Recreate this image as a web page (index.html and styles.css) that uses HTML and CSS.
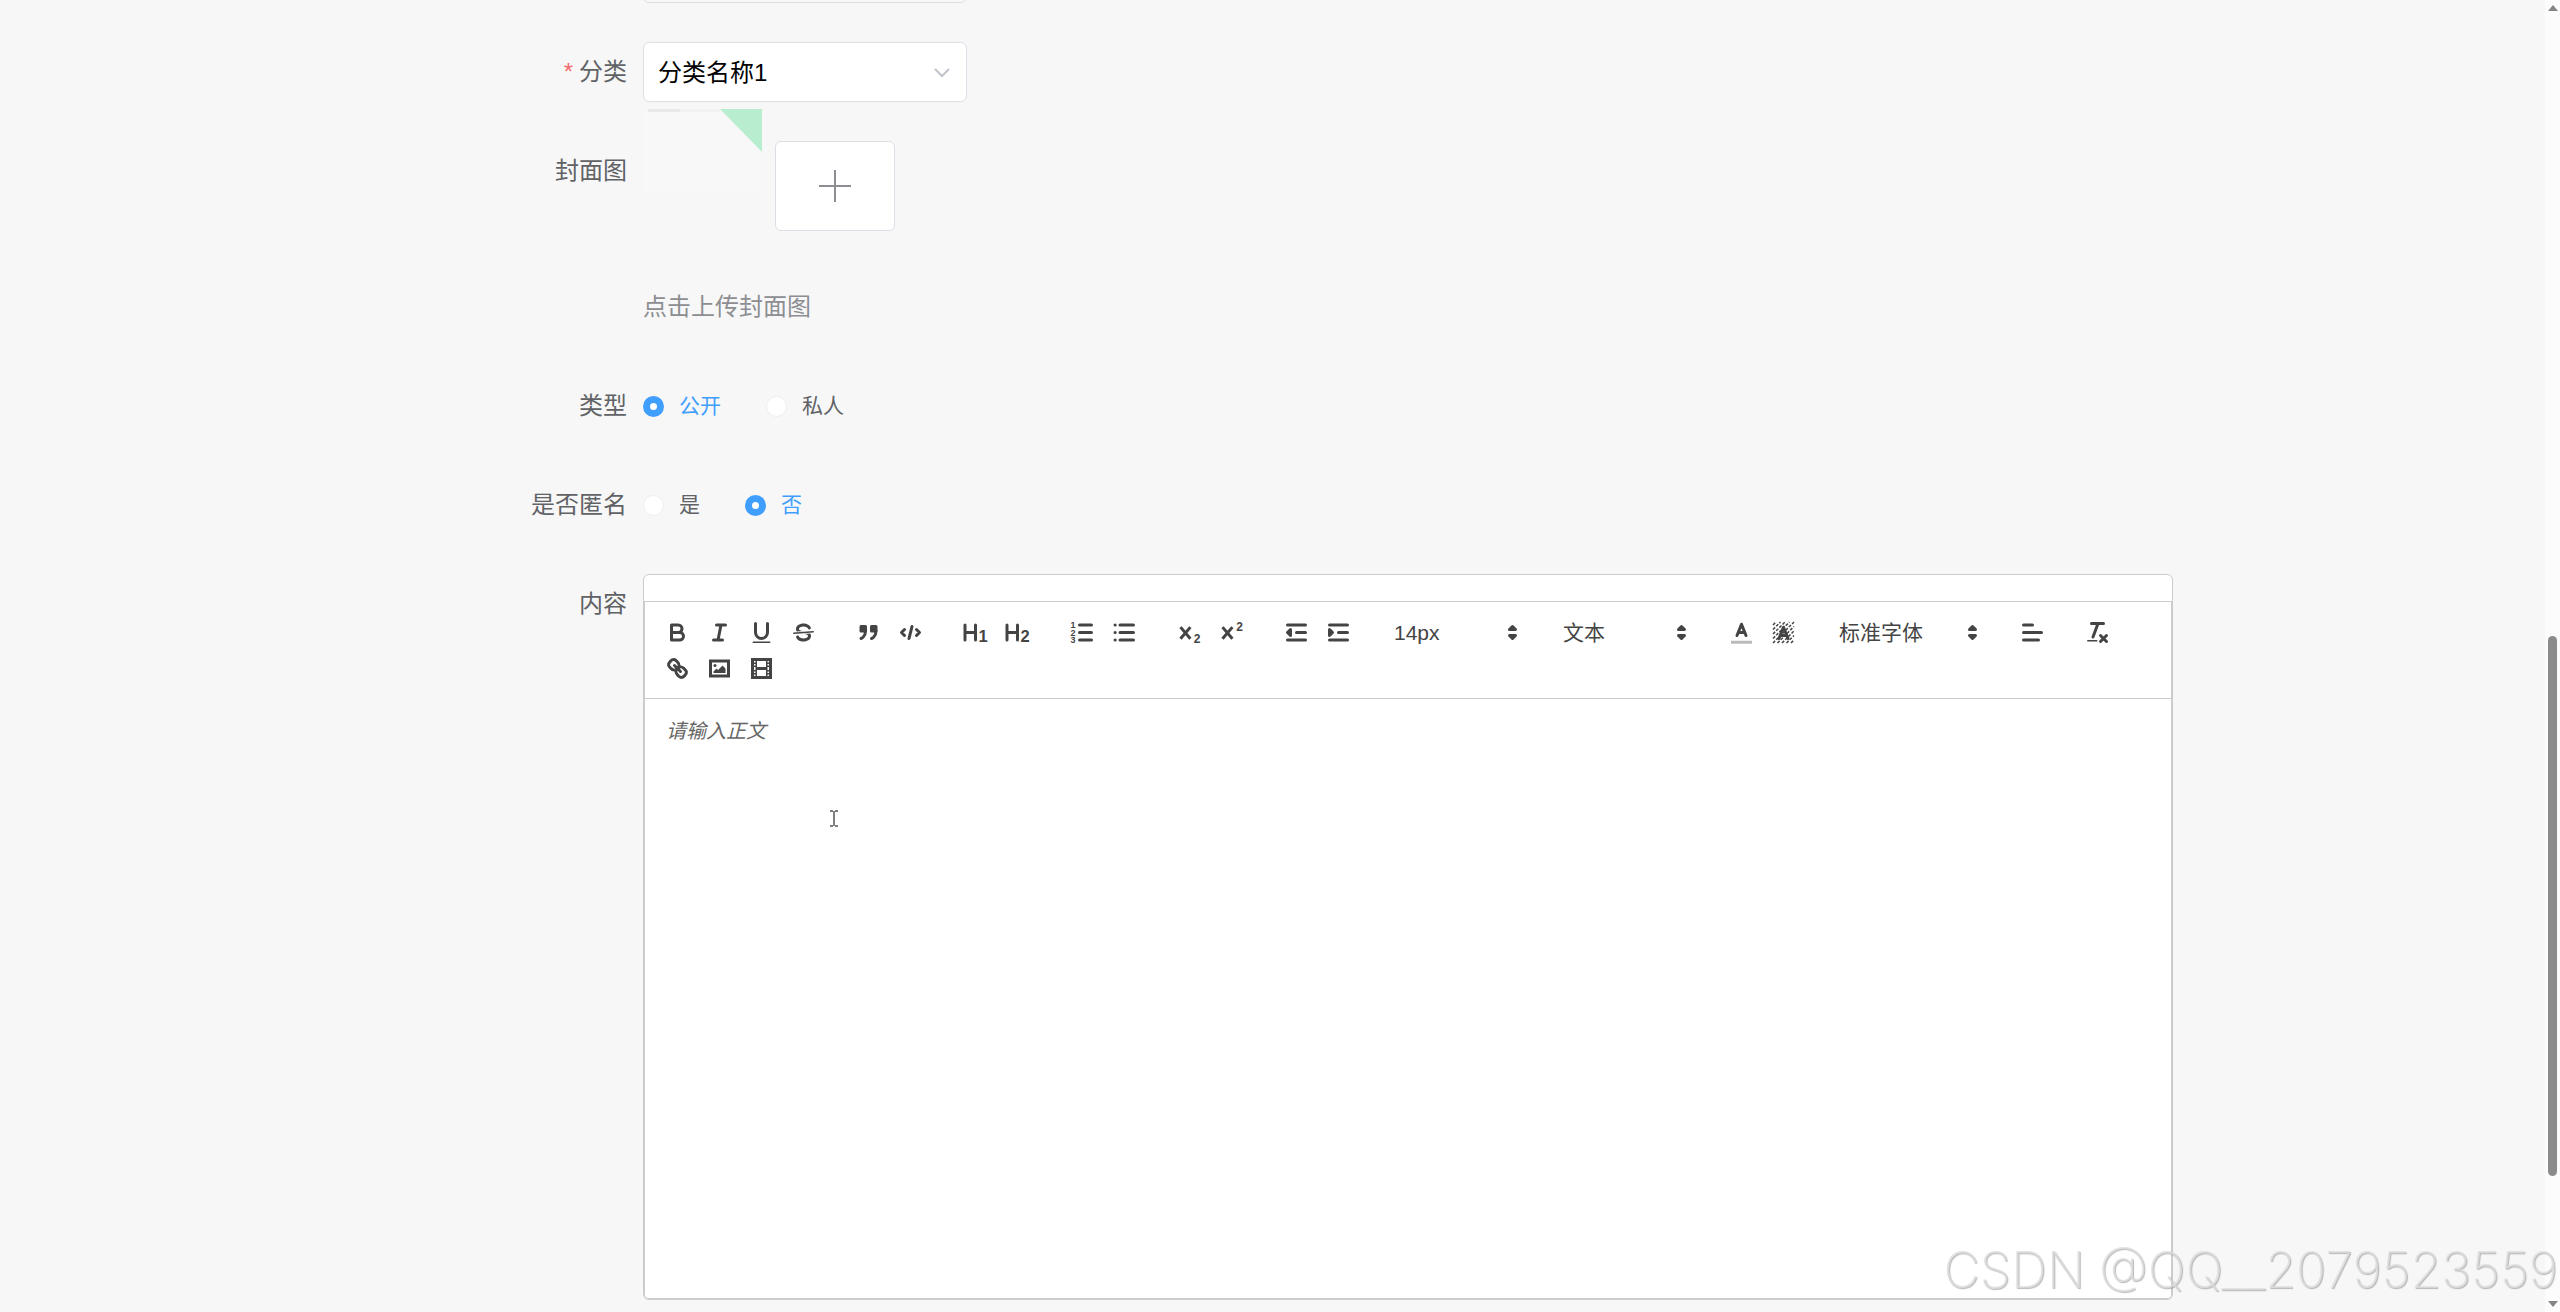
FILE: index.html
```
<!DOCTYPE html>
<html lang="zh-CN">
<head>
    <meta charset="utf-8">
    <meta name="viewport" content="width=device-width, initial-scale=1">
    <title>发布</title>
    <link rel="stylesheet" href="styles.css">
</head>

<body>

<form class="form">

    <div class="form-item">
        <label class="form-label" for="title"></label>
        <div class="form-content">
            <input class="input" type="text" id="title">
        </div>
    </div>

    <div class="form-item">
        <label class="form-label required" for="category">分类</label>
        <div class="form-content">
            <div class="select">
                <select id="category">
                    <option>分类名称1</option>
                </select>
                <svg class="chevron" viewBox="0 0 16 10"><path d="M1 1l7 7 7-7"/></svg>
            </div>
        </div>
    </div>

    <div class="form-item">
        <label class="form-label" for="cover">封面图</label>
        <div class="form-content">
            <div class="upload">
                <svg class="thumb" viewBox="0 0 119 84">
                    <rect width="119" height="84" fill="#f8f8f8"/>
                    <rect x="5" width="72" height="3" fill="#f2f2f3"/>
                    <rect x="5" width="32" height="3" fill="#e9e9ea"/>
                    <path d="M77 0H119V43Z" fill="#b9edd0"/>
                </svg>
                <button type="button" class="upload-btn" id="cover">
                    <svg viewBox="0 0 32 32"><path d="M16 0V32M0 16H32"/></svg>
                </button>
            </div>
            <div class="tip">点击上传封面图</div>
        </div>
    </div>

    <div class="form-item">
        <span class="form-label">类型</span>
        <div class="form-content radios">
            <label class="radio"><input type="radio" name="type" checked><span>公开</span></label>
            <label class="radio"><input type="radio" name="type"><span>私人</span></label>
        </div>
    </div>

    <div class="form-item">
        <span class="form-label">是否匿名</span>
        <div class="form-content radios">
            <label class="radio"><input type="radio" name="anonymous"><span>是</span></label>
            <label class="radio"><input type="radio" name="anonymous" checked><span>否</span></label>
        </div>
    </div>

    <div class="form-item">
        <label class="form-label" for="content">内容</label>
        <div class="form-content editor">
            <div class="toolbar">
                <div class="formats">
                    <button type="button" title="bold"><svg viewBox="0 0 18 18"><path d="M5,4H9.5A2.5,2.5,0,0,1,9.5,9H5Z"/><path d="M5,9h5.5A2.5,2.5,0,0,1,10.5,14H5Z"/></svg></button>
                    <button type="button" title="italic"><svg viewBox="0 0 18 18"><path d="M7,4H13M5,14H11M8,14L10,4"/></svg></button>
                    <button type="button" title="underline"><svg viewBox="0 0 18 18"><path d="M5,3V9a4,4,0,0,0,8,0V3"/><rect class="fill" x="3" y="15" width="12" height="1" rx="0.5"/></svg></button>
                    <button type="button" title="strike"><svg viewBox="0 0 18 18"><path class="thin" d="M15.5,8.5L2.5,9.5"/><path class="fill" d="M9.007,8C6.542,7.791,6,7.519,6,6.5,6,5.792,7.283,5,9,5c1.571,0,2.765.679,2.969,1.309a1,1,0,0,0,1.9-.617C13.356,4.106,11.354,3,9,3,6.2,3,4,4.538,4,6.5a3.2,3.2,0,0,0,.5,1.843Z"/><path class="fill" d="M8.984,10C11.457,10.208,12,10.479,12,11.5c0,.708-1.283,1.5-3,1.5-1.571,0-2.765-.679-2.969-1.309a1,1,0,1,0-1.9.617C4.644,13.894,6.646,15,9,15c2.8,0,5-1.538,5-3.5a3.2,3.2,0,0,0-.5-1.843Z"/></svg></button>
                </div>
                <div class="formats">
                    <button type="button" title="blockquote"><svg viewBox="0 0 18 18"><rect class="both" x="4" y="5" width="3" height="3"/><rect class="both" x="11" y="5" width="3" height="3"/><path d="M7,8c0,4.031-3,5-3,5M14,8c0,4.031-3,5-3,5"/></svg></button>
                    <button type="button" title="code"><svg viewBox="0 0 18 18"><path d="M5,7L3,9L5,11M13,7L15,9L13,11M10,5L8,13"/></svg></button>
                </div>
                <div class="formats">
                    <button type="button" title="header 1"><svg viewBox="0 0 18 18"><path d="M2,4V14M9,4V14M2,9H9"/><text x="11" y="15" font-size="11">1</text></svg></button>
                    <button type="button" title="header 2"><svg viewBox="0 0 18 18"><path d="M2,4V14M9,4V14M2,9H9"/><text x="11" y="15" font-size="11">2</text></svg></button>
                </div>
                <div class="formats">
                    <button type="button" title="ordered list"><svg viewBox="0 0 18 18"><path d="M7,4H15M7,9H15M7,14H15"/><text x="1" y="6" font-size="6">1</text><text x="1" y="11" font-size="6">2</text><text x="1" y="16" font-size="6">3</text></svg></button>
                    <button type="button" title="bullet list"><svg viewBox="0 0 18 18"><path d="M6,4H15M6,9H15M6,14H15"/><path d="M2.7,4H2.8M2.7,9H2.8M2.7,14H2.8"/></svg></button>
                </div>
                <div class="formats">
                    <button type="button" title="subscript"><svg viewBox="0 0 18 18"><path class="thick" d="M3,5.4L9.6,13.2M9.6,5.4L3,13.2"/><text x="11.8" y="16" font-size="8">2</text></svg></button>
                    <button type="button" title="superscript"><svg viewBox="0 0 18 18"><path class="thick" d="M3,5.4L9.6,13.2M9.6,5.4L3,13.2"/><text x="12.2" y="7.8" font-size="8">2</text></svg></button>
                </div>
                <div class="formats">
                    <button type="button" title="outdent"><svg viewBox="0 0 18 18"><path d="M3,14H15M3,4H15M9,9H15"/><path class="both" d="M5,7V11L3,9Z"/></svg></button>
                    <button type="button" title="indent"><svg viewBox="0 0 18 18"><path d="M3,14H15M3,4H15M9,9H15"/><path class="both" d="M3,7V11L5,9Z"/></svg></button>
                </div>
                <div class="formats">
                    <div class="picker">
                        <select aria-label="size"><option>14px</option></select>
                        <svg viewBox="0 0 18 18"><path class="both" d="M7,11L9,13L11,11ZM7,7L9,5L11,7Z"/></svg>
                    </div>
                </div>
                <div class="formats">
                    <div class="picker">
                        <select aria-label="header"><option>文本</option></select>
                        <svg viewBox="0 0 18 18"><path class="both" d="M7,11L9,13L11,11ZM7,7L9,5L11,7Z"/></svg>
                    </div>
                </div>
                <div class="formats">
                    <button type="button" title="color"><svg viewBox="0 0 18 18"><path class="faint" d="M2,15.5H16"/><path d="M6,11L9,3.5L12,11M7,9H11"/></svg></button>
                    <button type="button" title="background"><svg viewBox="0 0 18 18"><path class="hatch" d="M2,4L4,2M2,7L7,2M2,10L10,2M2,13L13,2M2,16L16,2M5,16L16,5M8,16L16,8M11,16L16,11M14,16L16,14"/><path d="M6,13L9,5.5L12,13M7,11H11"/></svg></button>
                </div>
                <div class="formats">
                    <div class="picker picker-font">
                        <select aria-label="font"><option>标准字体</option></select>
                        <svg viewBox="0 0 18 18"><path class="both" d="M7,11L9,13L11,11ZM7,7L9,5L11,7Z"/></svg>
                    </div>
                </div>
                <div class="formats">
                    <button type="button" title="align"><svg viewBox="0 0 18 18"><path d="M3,9H15M3,14H13M3,4H9"/></svg></button>
                </div>
                <div class="formats">
                    <button type="button" title="clean"><svg viewBox="0 0 18 18"><path d="M5,3H13M6,12L9.35,3M11,11L15,15M15,11L11,15"/><rect class="fill" x="2" y="14" width="7" height="1" rx="0.5"/></svg></button>
                </div>
                <div class="formats">
                    <button type="button" title="link"><svg viewBox="0 0 18 18"><path d="M7,7L11,11"/><path d="M8.9,4.577a3.476,3.476,0,0,1,.36,4.679A3.476,3.476,0,0,1,4.577,8.9C3.185,7.5,2.035,6.4,4.217,4.217S7.5,3.185,8.9,4.577Z"/><path d="M13.423,9.1a3.476,3.476,0,0,0-4.679-.36,3.476,3.476,0,0,0,.36,4.679c1.392,1.392,2.5,2.542,4.679.36S14.815,10.5,13.423,9.1Z"/></svg></button>
                    <button type="button" title="image"><svg viewBox="0 0 18 18"><rect class="line" x="3" y="4" width="12" height="10"/><circle class="fill" cx="6" cy="7" r="1"/><path class="fill" d="M5,12V11L7,9L8,10L11,7L13,9V12Z"/></svg></button>
                    <button type="button" title="video"><svg viewBox="0 0 18 18"><rect class="line" x="3" y="3" width="12" height="12"/><path class="fill" d="M5,3H6V15H5ZM12,3H13V15H12ZM5,8H13V10H5ZM3,5H6V6H3ZM3,7H6V8H3ZM3,10H6V11H3ZM3,12H6V13H3ZM12,5H15V6H12ZM12,7H15V8H12ZM12,10H15V11H12ZM12,12H15V13H12Z"/></svg></button>
                </div>
            </div>
            <textarea class="editor-text" id="content" placeholder="请输入正文"></textarea>
            <svg class="cursor" viewBox="0 0 8 17"><path d="M0 1H3M5 1H8M4 1V16M0 16H3M5 16H8"/></svg>
        </div>
    </div>

</form>

<div class="scrollbar">
    <svg viewBox="0 0 10 6"><path d="M5 0L10 6H0Z"/></svg>
    <div class="scroll-track"><div class="scroll-thumb"></div></div>
    <svg viewBox="0 0 10 6"><path d="M0 0H10L5 6Z"/></svg>
</div>

<div class="watermark">CSDN @QQ__2079523559</div>

</body>
</html>
```
FILE: styles.css
```
* {
    box-sizing: border-box;
}

body {
    margin: 0;
    min-height: 100vh;
    overflow: hidden;
    background-color: #f7f7f7;
    color: #606266;
    font-family: "Liberation Sans", "Noto Sans CJK SC", sans-serif;
    font-size: 24px;
}

button, input, select, textarea {
    font-family: inherit;
    color: inherit;
}

/* the page is scrolled, the first field is cut off by the window */
.form {
    margin-top: -57px;
    padding: 0 387px 0 380px;
}

.form-item {
    display: flex;
    margin-bottom: 39px;
}

.form-item:last-child {
    margin-bottom: 0;
}

.form-label {
    flex: none;
    width: 263px;
    padding-right: 16px;
    line-height: 60px;
    text-align: right;
}

.required:before {
    content: "*";
    color: #f56c6c;
    margin-right: 6px;
}

.form-content {
    flex: 1;
    min-width: 0;
}

.input, .select select {
    display: block;
    width: 324px;
    height: 60px;
    padding: 0 14px;
    border: 1px solid #dcdfe6;
    border-radius: 6px;
    background-color: #fff;
    color: #000;
    font-size: 24px;
    appearance: none;
}

.input {
    background-color: #f7f7f7;
}

.select {
    position: relative;
    width: 324px;
}

.chevron {
    position: absolute;
    top: 26px;
    right: 17px;
    width: 16px;
    height: 10px;
    fill: none;
    stroke: #c0c4cc;
    stroke-width: 2;
}

/* upload */
.upload {
    display: flex;
    gap: 13px;
}

.thumb {
    width: 119px;
    height: 84px;
    margin-top: -32px;
}

.upload-btn {
    display: flex;
    align-items: center;
    justify-content: center;
    width: 120px;
    height: 90px;
    padding: 0;
    border: 1px solid #dcdfe6;
    border-radius: 6px;
    background-color: #fff;
}

.upload-btn svg {
    width: 32px;
    height: 32px;
    fill: none;
    stroke: #8c8e94;
    stroke-width: 2;
}

.tip {
    margin-top: 46px;
    line-height: 60px;
    color: #8c8e92;
}

/* radio */
.radios {
    display: flex;
    gap: 45px;
}

.radio {
    display: flex;
    align-items: center;
    gap: 15px;
    height: 60px;
    font-size: 21px;
    line-height: 24px;
}

.radio input {
    width: 21px;
    height: 21px;
    margin: 0;
    border: 1px solid #eceef2;
    border-radius: 50%;
    background-color: #fff;
    appearance: none;
}

.radio input:checked {
    border: 7px solid #409eff;
}

.radio input:checked + span {
    color: #409eff;
}

/* editor */
.editor {
    position: relative;
    padding-top: 26px;
    border: 1px solid #ccc;
    border-radius: 6px;
    background-color: #fff;
}

.toolbar {
    display: flex;
    flex-wrap: wrap;
    column-gap: 23px;
    padding: 12px 11px;
    border: 1px solid #ccc;
    color: #444;
}

.formats {
    display: flex;
}

.formats button {
    display: flex;
    align-items: center;
    justify-content: center;
    width: 42px;
    height: 36px;
    padding: 0;
    border: none;
    background: none;
    cursor: pointer;
}

.formats svg {
    width: 27px;
    height: 27px;
    fill: none;
    stroke: #444;
    stroke-width: 2;
    stroke-linecap: round;
    stroke-linejoin: round;
}

.formats .fill, .formats text {
    fill: #444;
    stroke: none;
}

.formats text {
    font-weight: bold;
}

.formats .both {
    fill: #444;
}

.formats .line {
    stroke-linejoin: miter;
}

.formats .thin {
    stroke-width: 1;
}

.formats .thick {
    stroke-linecap: butt;
}

.formats .faint {
    stroke: #bbb;
    stroke-linecap: butt;
}

.formats .hatch {
    stroke-width: 1;
    stroke-dasharray: 2 1;
    stroke-linecap: butt;
}

.picker {
    position: relative;
    width: 146px;
    height: 36px;
}

.picker-font {
    width: 161px;
}

.picker select {
    width: 100%;
    height: 36px;
    padding: 0 12px;
    border: none;
    background: none;
    font-size: 21px;
    appearance: none;
}

.picker svg {
    position: absolute;
    top: 5px;
    right: 2px;
    pointer-events: none;
}

.editor-text {
    display: block;
    width: 100%;
    height: 600px;
    padding: 18px 21px;
    border: 1px solid #ccc;
    border-top: none;
    border-radius: 0 0 4px 4px;
    background-color: #fff;
    font-size: 20px;
    line-height: 28px;
    resize: none;
    outline: none;
}

.editor-text::placeholder {
    color: #666;
    font-style: italic;
}

.cursor {
    position: absolute;
    top: 235px;
    left: 186px;
    width: 8px;
    height: 17px;
    fill: none;
    stroke: #000;
}

/* window scrollbar */
.scrollbar {
    position: fixed;
    top: 0;
    right: 0;
    bottom: 0;
    display: flex;
    flex-direction: column;
    align-items: center;
    width: 15px;
    padding: 5px 0;
    background-color: #fcfcfc;
}

.scrollbar svg {
    width: 10px;
    height: 6px;
    fill: #858585;
}

.scroll-track {
    flex: 1;
    width: 9px;
    padding-top: 625px;
}

.scroll-thumb {
    height: 540px;
    border-radius: 5px;
    background-color: #8b8b8b;
}

.watermark {
    position: fixed;
    right: 2px;
    bottom: 14px;
    font-family: Inter, "Liberation Sans", sans-serif;
    font-size: 50px;
    font-weight: 200;
    line-height: 56px;
    color: rgba(222, 222, 222, 0.8);
    text-shadow: 1px 1px 1px rgba(120, 120, 120, 0.5);
}
```
